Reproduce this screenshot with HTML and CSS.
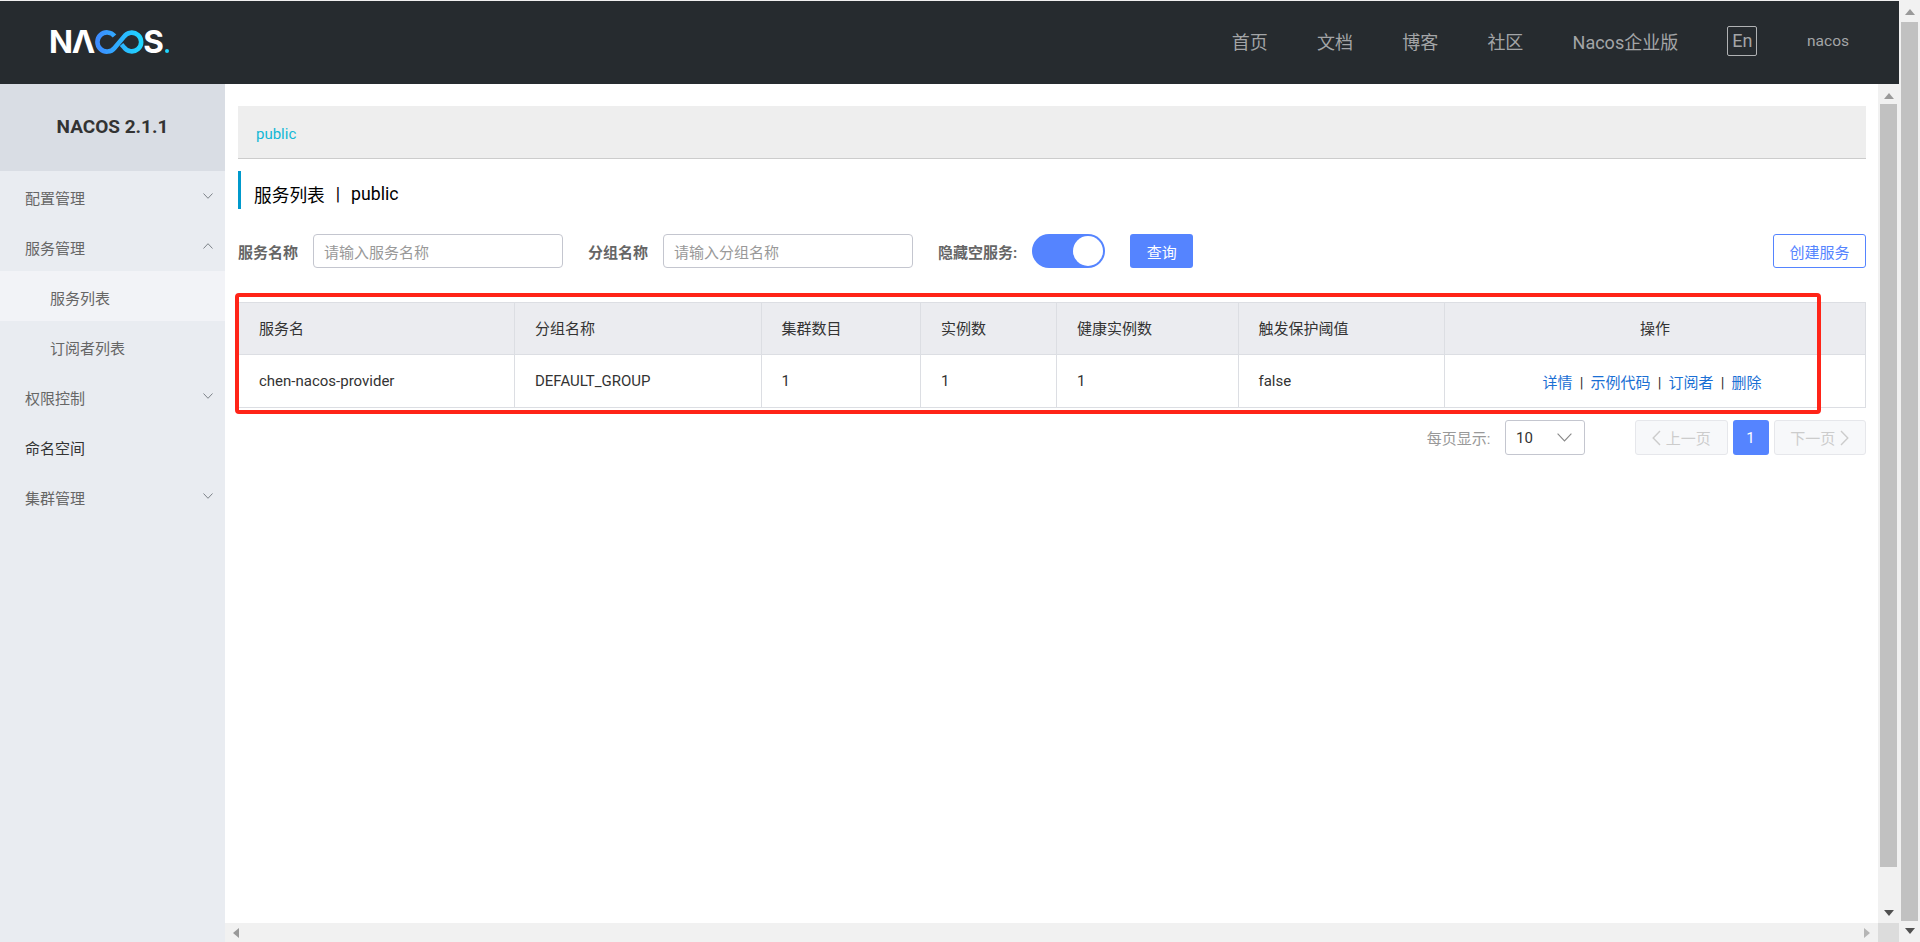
FILE: index.html
```html
<!DOCTYPE html>
<html lang="zh">
<head>
<meta charset="utf-8">
<title>Nacos</title>
<link rel="stylesheet" href="styles.css">
</head>
<body>
<div class="page">
  <div class="app">
    <header class="header">
      <div class="logo">
        <span class="logo-text">NΛ</span>
        <svg class="logo-loop" viewBox="0 0 53 24" width="53" height="24" aria-hidden="true">
          <defs>
            <linearGradient id="loopgrad" x1="0" x2="1" y1="0" y2="0">
              <stop offset="0" stop-color="#3d8bff"/>
              <stop offset="1" stop-color="#1fd6ff"/>
            </linearGradient>
          </defs>
          <path d="M20.5 6 A9.6 9.6 0 1 0 20.5 18 L30 6.7 A9.4 9.4 0 1 1 30 17.3 L27.5 14.5" fill="none" stroke="url(#loopgrad)" stroke-width="4.6"/>
        </svg>
        <span class="logo-text logo-s">S</span><span class="logo-dot"></span>
      </div>
      <nav class="nav">
        <span>首页</span><span>文档</span><span>博客</span><span>社区</span><span>Nacos企业版</span>
        <span class="lang">En</span>
        <span class="user">nacos</span>
      </nav>
    </header>
    <div class="body">
      <aside class="sidebar">
        <div class="side-head">NACOS 2.1.1</div>
        <ul class="menu">
          <li class="menu-item">配置管理<svg class="chev" viewBox="0 0 10 6" width="10" height="6"><path d="M.5.5 5 5.3 9.5.5"/></svg></li>
          <li class="menu-item menu-open">服务管理<svg class="chev" viewBox="0 0 10 6" width="10" height="6"><path d="M.5 5.5 5 .7 9.5 5.5"/></svg></li>
          <li class="menu-item menu-sub menu-active">服务列表</li>
          <li class="menu-item menu-sub">订阅者列表</li>
          <li class="menu-item">权限控制<svg class="chev" viewBox="0 0 10 6" width="10" height="6"><path d="M.5.5 5 5.3 9.5.5"/></svg></li>
          <li class="menu-item menu-dark">命名空间</li>
          <li class="menu-item">集群管理<svg class="chev" viewBox="0 0 10 6" width="10" height="6"><path d="M.5.5 5 5.3 9.5.5"/></svg></li>
        </ul>
      </aside>
      <div class="main">
        <div class="main-row">
          <section class="content">
            <div class="crumb">public</div>
            <h1 class="title">服务列表<span class="title-sep">|</span>public</h1>
            <form class="search">
              <label class="field-label">服务名称</label>
              <div class="input input-a">请输入服务名称</div>
              <label class="field-label">分组名称</label>
              <div class="input input-b">请输入分组名称</div>
              <label class="field-label">隐藏空服务:</label>
              <span class="switch"><span class="knob"></span></span>
              <span class="btn btn-primary">查询</span>
              <span class="btn btn-outline">创建服务</span>
            </form>
            <div class="table-wrap">
              <table class="table">
                <colgroup>
                  <col class="c1"><col class="c2"><col class="c3"><col class="c4"><col class="c5"><col class="c6"><col class="c7">
                </colgroup>
                <thead>
                  <tr><th>服务名</th><th>分组名称</th><th>集群数目</th><th>实例数</th><th>健康实例数</th><th>触发保护阈值</th><th class="center">操作</th></tr>
                </thead>
                <tbody>
                  <tr>
                    <td>chen-nacos-provider</td><td>DEFAULT_GROUP</td><td>1</td><td>1</td><td>1</td><td>false</td>
                    <td class="center actions"><a>详情</a><span class="sep">|</span><a>示例代码</a><span class="sep">|</span><a>订阅者</a><span class="sep">|</span><a>删除</a></td>
                  </tr>
                </tbody>
              </table>
              <div class="annotation"></div>
            </div>
            <div class="pager">
              <span class="pager-label">每页显示:</span>
              <span class="select">10<svg viewBox="0 0 15 9" width="15" height="9"><path d="M.6.6 7.5 8 14.4.6"/></svg></span>
              <span class="page-btn page-nav page-prev"><svg viewBox="0 0 9 16" width="9" height="16"><path d="M8 1 1.2 8 8 15"/></svg>上一页</span>
              <span class="page-btn page-cur">1</span>
              <span class="page-btn page-nav">下一页<svg viewBox="0 0 9 16" width="9" height="16"><path d="M1 1 7.8 8 1 15"/></svg></span>
            </div>
          </section>
          <div class="vbar vbar-inner">
            <svg class="arrow" viewBox="0 0 10 6" width="10" height="6"><path class="fill-mid" d="M5 0 10 6H0z"/></svg>
            <div class="vthumb vthumb-inner"></div>
            <svg class="arrow" viewBox="0 0 10 6" width="10" height="6"><path class="fill-dark" d="M5 6 0 0H10z"/></svg>
          </div>
        </div>
        <div class="hbar">
          <div class="hbar-track">
            <svg viewBox="0 0 6 10" width="6" height="10"><path class="fill-mid" d="M0 5 6 0V10z"/></svg>
            <svg viewBox="0 0 6 10" width="6" height="10"><path class="fill-light" d="M6 5 0 0V10z"/></svg>
          </div>
          <div class="corner"></div>
        </div>
      </div>
    </div>
  </div>
  <div class="vbar vbar-outer">
    <svg class="arrow" viewBox="0 0 10 6" width="10" height="6"><path class="fill-mid" d="M5 0 10 6H0z"/></svg>
    <div class="vthumb vthumb-outer"></div>
    <svg class="arrow" viewBox="0 0 10 6" width="10" height="6"><path class="fill-dark" d="M5 6 0 0H10z"/></svg>
  </div>
</div>
</body>
</html>
```
FILE: styles.css
```css
* { box-sizing: border-box; }
html, body { margin: 0; height: 100%; overflow: hidden; background: #fff; }
body { font-family: Roboto, "Noto Sans CJK SC", sans-serif; font-size: 15px; color: #333; }
.page { display: flex; height: 942px; width: 1920px; }
.app { width: 1899px; display: flex; flex-direction: column; padding-top: 1px; background: #f0f0f0; }

.header { height: 83px; flex: none; background: #262b2f; display: flex; align-items: center; justify-content: space-between; padding: 0 50px; }
.logo { display: flex; align-items: center; height: 24px; margin-top: -2px; margin-left: -1px; }
.logo-text { font-family: Inter, sans-serif; font-weight: 700; font-size: 31.5px; line-height: 24px; color: #fff; letter-spacing: -1.2px; }
.logo-s { margin-left: -4px; letter-spacing: 0; }
.logo-dot { width: 4px; height: 4px; border-radius: 50%; background: #1fd6ff; align-self: flex-end; margin-left: 1px; margin-bottom: 1px; }
.nav { display: flex; align-items: center; gap: 49.2px; font-size: 18px; color: #a3a5a7; padding-bottom: 3px; }
.lang { width: 30px; height: 30px; border: 1px solid #b0b2b4; border-radius: 2px; display: flex; align-items: center; justify-content: center; line-height: 1; }
.user { font-size: 15.5px; margin-left: .5px; }

.body { flex: 1; display: flex; min-height: 0; }
.sidebar { width: 225px; flex: none; background: #e9ecf1; }
.side-head { height: 87px; background: #d9dde4; display: flex; align-items: center; justify-content: center; padding-bottom: 2px; font-size: 19px; font-weight: 700; color: #333; }
.menu { list-style: none; margin: 0; padding: 0; }
.menu-item { height: 50px; padding: 2px 0 0 25px; display: flex; align-items: center; position: relative; color: #666; }
.menu-sub { padding-left: 50px; }
.menu-active { background: #f2f3f7; }
.menu-dark { color: #333; }
.chev { position: absolute; left: 203px; top: 22px; fill: none; stroke: #7d8288; stroke-width: 1; }

.main { flex: 1; min-width: 0; display: flex; flex-direction: column; }
.main-row { flex: 1; display: flex; min-height: 0; }
.content { flex: 1; min-width: 0; background: #fff; padding: 22px 12px 0 13px; }

.crumb { height: 53px; background: #eee; border-bottom: 1px solid #ccc; padding: 3px 0 0 18px; display: flex; align-items: center; font-size: 15px; color: #12b8d6; }
.title { margin: 12px 0 0; height: 38px; border-left: 3px solid #09c; padding: 8px 0 0 13px; display: flex; align-items: center; font-size: 17.7px; font-weight: 400; color: #000; }
.title-sep { margin: 0 11px; }

.search { margin-top: 25px; height: 34px; display: flex; align-items: center; }
.field-label { font-weight: 700; color: #666; white-space: nowrap; }
.input { height: 34px; border: 1px solid #c4c6cf; border-radius: 4px; padding-left: 10px; display: flex; align-items: center; color: #999; background: #fff; margin-left: 15px; }
.input-a { width: 250px; margin-right: 25px; }
.input-b { width: 250px; margin-right: 25px; }
.switch { width: 73px; height: 34px; margin-left: 15px; border-radius: 17px; background: #5584ff; display: flex; align-items: center; justify-content: flex-end; padding-right: 2px; }
.knob { width: 30px; height: 30px; border-radius: 50%; background: #fff; }
.btn { height: 34px; border-radius: 3px; display: flex; align-items: center; justify-content: center; }
.btn-primary { width: 63px; margin-left: 25px; background: #5584ff; color: #fff; }
.btn-outline { width: 93px; margin-left: auto; border: 1px solid #5584ff; color: #5584ff; background: #fff; }

.table-wrap { position: relative; margin-top: 34px; }
.table { width: 1627px; border-collapse: collapse; table-layout: fixed; }
.c1 { width: 276px; } .c2 { width: 246.5px; } .c3 { width: 159.5px; } .c4 { width: 136px; } .c5 { width: 181.5px; } .c6 { width: 206.5px; } .c7 { width: 421px; }
.table th, .table td { border: 1px solid #dcdee3; text-align: left; font-weight: 400; color: #333; white-space: nowrap; }
.table th { height: 52px; padding: 0 20px 2px; background: #ebecf0; }
.table td { height: 53px; padding: 0 20px; }
.table .center { text-align: center; }
.table .actions { padding-right: 26px; }
.actions a { color: #1a6fd4; }
.sep { display: inline-block; width: 18px; text-align: center; color: #333; }
.annotation { position: absolute; left: -3px; top: -9px; width: 1586px; height: 121px; border: 4.5px solid #ff2418; border-radius: 4px; }

.pager { margin-top: 12px; height: 35px; display: flex; align-items: center; }
.pager-label { margin-left: auto; color: #999; }
.select { width: 80px; height: 35px; margin-left: 14.5px; border: 1px solid #c4c6cf; border-radius: 3px; padding: 0 12px 0 10px; display: flex; align-items: center; justify-content: space-between; color: #333; }
.select svg { fill: none; stroke: #888; stroke-width: 1.1; }
.page-btn { height: 35px; border-radius: 3px; display: flex; align-items: center; justify-content: center; }
.page-nav { width: 92.5px; background: #f7f8fa; border: 1px solid #e6e7eb; color: #ccc; gap: 5px; }
.page-nav svg { fill: none; stroke: #ccc; stroke-width: 1.4; }
.page-prev { margin-left: 50px; }
.page-cur { width: 36px; margin: 0 5px; background: #5584ff; color: #fff; }

.vbar { width: 21px; flex: none; background: #f1f1f1; display: flex; flex-direction: column; align-items: center; justify-content: space-between; }
.vbar-inner { padding: 9px 0 7px; }
.vbar-outer { padding: 9px 0 8px; }
.vthumb { width: 17px; background: #c1c1c1; }
.vthumb-inner { height: 771px; margin-top: 5px; margin-bottom: 43px; }
.vthumb-outer { height: 899px; margin-top: 7px; margin-bottom: 7px; }
.fill-mid { fill: #999; }
.fill-dark { fill: #505050; }
.fill-light { fill: #b5b5b5; }

.hbar { height: 19px; flex: none; display: flex; }
.hbar-track { flex: 1; background: #f1f1f1; display: flex; align-items: center; justify-content: space-between; padding: 0 8px; }
.corner { width: 21px; background: #dcdcdc; }
```
